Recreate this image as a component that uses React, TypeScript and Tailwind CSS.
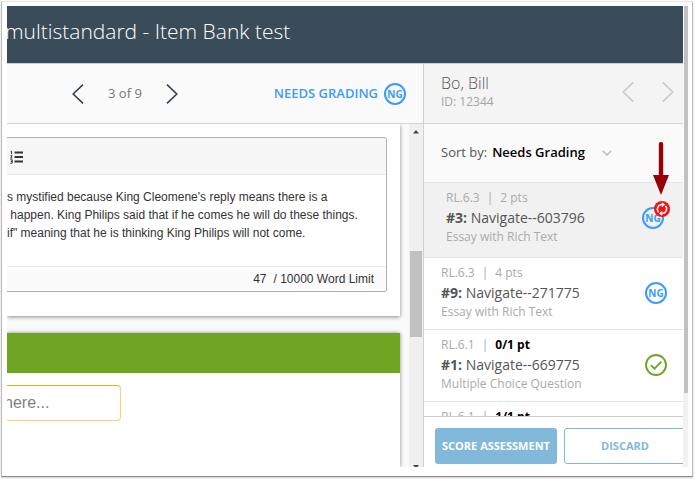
import { useState } from 'react';
import clsx from 'clsx';

const ITEMS = [
  { id: 3, std: 'RL.6.3', score: '2 pts', name: 'Navigate--603796', kind: 'Essay with Rich Text', status: 'rescore' },
  { id: 9, std: 'RL.6.3', score: '4 pts', name: 'Navigate--271775', kind: 'Essay with Rich Text', status: 'ng' },
  { id: 1, std: 'RL.6.1', score: '0/1 pt', name: 'Navigate--669775', kind: 'Multiple Choice Question', status: 'done' },
  { id: 2, std: 'RL.6.1', score: '1/1 pt', name: '', kind: '', status: 'none' },
];

const ANSWER = [
  "s mystified because King Cleomene's reply means there is a",
  ' happen. King Philips said that if he comes he will do these things.',
  'if" meaning that he is thinking King Philips will not come.',
];

function Chevron({ dir }: { dir: 'left' | 'right' }) {
  return (
    <svg width="12" height="20" viewBox="0 0 12 20" fill="none" stroke="currentColor" strokeWidth="1.6">
      <path d={dir === 'left' ? 'M11 .6 1.2 10 11 19.4' : 'M1 .6 10.8 10 1 19.4'} />
    </svg>
  );
}

function NgBadge() {
  return (
    <span className="flex size-[22px] items-center justify-center rounded-full border-2 border-[#3c9bfb] text-[10px] leading-none font-bold text-[#3c9bfb]">
      NG
    </span>
  );
}

function RescoreIcon() {
  return (
    <svg className="absolute -top-[7px] left-[11px]" width="18" height="18" viewBox="0 0 18 18">
      <circle cx="9" cy="9" r="8" fill="#fb0d0d" />
      <g fill="none" stroke="#fff" strokeWidth="1.5">
        <path d="M5.6 12.2A4.6 4.6 0 0 1 9 4.5" />
        <path d="M12.4 5.8A4.6 4.6 0 0 1 9 13.5" />
      </g>
      <path d="M8.8 2.2 12.2 4.6 8.8 7.2zM9.2 15.8 5.8 13.4 9.2 10.8z" fill="#fff" />
    </svg>
  );
}

function Pointer() {
  return (
    <svg className="pointer-events-none absolute top-[18px] right-[13px]" width="18" height="54" viewBox="0 0 18 54" fill="#970006">
      <rect x="6.8" y="0" width="4.4" height="36" rx="2" />
      <path d="M1 33h16L9 53z" />
    </svg>
  );
}

function Status({ status }: { status: string }) {
  if (status === 'done') {
    return (
      <svg width="22" height="22" viewBox="0 0 22 22" fill="none" stroke="#6ea522">
        <circle cx="11" cy="11" r="10" strokeWidth="1.9" />
        <path d="m6 11.2 3.6 3.5 6.6-7" strokeWidth="1.8" />
      </svg>
    );
  }
  if (status === 'ng') return <NgBadge />;
  if (status === 'rescore') {
    return (
      <span className="relative">
        <NgBadge />
        <RescoreIcon />
      </span>
    );
  }
  return null;
}

function ResponsePane() {
  return (
    <div className="flex min-h-0 flex-1 bg-[#fafafa]">
      <div className="flex min-w-0 flex-1 flex-col gap-[17px] overflow-hidden pr-[9px]">
        <section className="bg-white pt-[13px] pr-[13px] pb-6 shadow-[0_1px_4px_rgba(0,0,0,0.45)]">
          <div className="overflow-hidden rounded-r-[3px] border border-l-0 border-[#b0b0b0] bg-white">
            <div className="flex h-[37px] items-center border-b border-[#e8e8e8] bg-[#f7f7f7] pt-px pl-[3px]">
              <button aria-label="Numbered list">
                <svg width="14" height="14" viewBox="0 0 14 14" fill="none" stroke="#333">
                  <path d="M4.5 2.5H13M4.5 7H13M4.5 11.5H13" strokeWidth="1.8" />
                  <path d="M.6 1.2h1v3M.5 5.7h1.6L.7 8.2h1.6M.4 9.8h1.8v3.4H.4M.9 11.5h1.2" />
                </svg>
              </button>
            </div>
            <div className="h-[92px] border-b border-[#ececec] pt-[13px] font-['Liberation_Sans',sans-serif] text-[12px] leading-[18px] whitespace-pre text-[#333]">
              {ANSWER.map(line => (
                <p key={line}>{line}</p>
              ))}
            </div>
            <div className="flex h-6 items-center justify-end gap-[7px] bg-[#fbfbfb] pr-3 font-['Liberation_Sans',sans-serif] text-[12px] text-[#333]">
              <span>47</span>
              <span>/ 10000 Word Limit</span>
            </div>
          </div>
        </section>
        <section className="flex-1 bg-white shadow-[0_0_4px_rgba(0,0,0,0.45)]">
          <div className="h-10 bg-[#6ea522]" />
          <input
            type="text"
            aria-label="here..."
            placeholder="here..."
            className="mt-3 -ml-3 h-9 w-[126px] rounded-[4px] border border-[#fccf78] border-t-[#f2a816] px-2 font-['Liberation_Sans',sans-serif] text-[16px] text-[#444] placeholder:text-[#7f7f7f]"
          />
        </section>
      </div>
      <div className="flex w-[14px] flex-col items-center overflow-hidden bg-[#f0f0f0] pt-[6px]">
        <svg width="6" height="4" viewBox="0 0 6 4" fill="#444">
          <path d="M3 0 6 3.5H0z" />
        </svg>
        <div className="mt-[117px] h-[86px] w-3 bg-[#c1c1c1]" />
        <svg className="mt-auto" width="6" height="2" viewBox="0 0 6 2" fill="#444">
          <path d="M0 0h6L4.3 2H1.7z" />
        </svg>
      </div>
    </div>
  );
}

export default function App() {
  const [active, setActive] = useState(3);

  return (
    <div className="h-screen bg-white pt-px pr-[2px] pb-[2px] pl-px font-['Open_Sans',sans-serif]">
      <div className="flex h-full border border-t-[#e4e4e4] border-r-[#bbb] border-b-[#8a8a8a] border-l-[#bbb] pt-1 pr-1 pb-[9px] pl-[5px] shadow-[0_1px_2px_rgba(0,0,0,0.2)]">
        <div className="flex min-w-0 flex-1 flex-col overflow-hidden">
          <header className="h-[58px] shrink-0 border-b border-[#c8d0d4] bg-[#3a4b59]">
            <h1 className="-ml-[2px] pt-[10px] text-[21px] leading-[30px] font-light whitespace-nowrap text-white">
              multistandard - Item Bank test
            </h1>
          </header>
          <div className="flex min-h-0 flex-1">
            <main className="flex min-w-0 flex-1 flex-col">
              <div className="flex h-[60px] shrink-0 items-center justify-between border-b border-[#d4d4d4] bg-[#fafafa] pr-[17px] pl-[65px]">
                <div className="flex items-center gap-6 text-[13px] text-[#777]">
                  <button aria-label="Previous item" className="text-[#33424e]"><Chevron dir="left" /></button>
                  <span>3 of 9</span>
                  <button aria-label="Next item" className="text-[#33424e]"><Chevron dir="right" /></button>
                </div>
                <div className="flex items-center gap-[6px] text-[13px] font-semibold text-[#3c9bfb]">
                  NEEDS GRADING <NgBadge />
                </div>
              </div>
              <ResponsePane />
            </main>

            <aside className="flex w-[260px] shrink-0 flex-col border-l border-[#d0d0d0] bg-white">
              <div className="flex h-[60px] shrink-0 items-center justify-between border-b border-[#d8d8d8] bg-[#f4f4f4] pr-[9px] pb-[3px] pl-[17px]">
                <div>
                  <div className="text-[16px] leading-[20px] font-light text-[#555]">Bo, Bill</div>
                  <div className="text-[12px] leading-[18px] text-[#a5a5a5]">ID: 12344</div>
                </div>
                <div className="flex gap-7 text-[#c8c8c8]">
                  <button aria-label="Previous student"><Chevron dir="left" /></button>
                  <button aria-label="Next student"><Chevron dir="right" /></button>
                </div>
              </div>
              <div className="relative flex min-h-0 flex-1 flex-col">
                <div className="flex h-[58px] shrink-0 items-center bg-[#fafafa] pl-[17px] text-[13px]">
                  <label htmlFor="sort" className="text-[#555]">Sort by:</label>
                  <select id="sort" className="ml-[5px] w-[110px] appearance-none font-semibold text-black">
                    <option>Needs Grading</option>
                  </select>
                  <svg width="10" height="6" viewBox="0 0 10 6" fill="none" stroke="#bbb" strokeWidth="1.4">
                    <path d="m.7.7 4.3 4.2L9.3.7" />
                  </svg>
                </div>
                <ul className="min-h-0 flex-1 overflow-hidden">
                  {ITEMS.map(item => (
                    <li key={item.id} className="border-t border-[#e4e4e4]">
                      <button
                        onClick={() => setActive(item.id)}
                        className={clsx(
                          'flex w-full items-center justify-between text-left',
                          active === item.id ? 'h-[74px] bg-[#f1f1f1] pr-[19px] pb-1 pl-[22px]' : 'h-[71px] pr-4 pb-[2px] pl-[17px]',
                        )}
                      >
                        <span className="flex flex-col pb-[2px]">
                          <span className="flex h-5 items-center gap-[7px] text-[12px] text-[#aaa]">
                            {item.std} <span>|</span>
                            <span className={clsx(item.score.includes('/') && 'font-bold text-black')}>{item.score}</span>
                          </span>
                          <span className="h-5 text-[14px] leading-5 text-[#555]">
                            {item.name && <><b>#{item.id}:</b> {item.name}</>}
                          </span>
                          <span className="h-[18px] text-[12px] leading-[18px] text-[#aaa]">{item.kind}</span>
                        </span>
                        <Status status={item.status} />
                      </button>
                    </li>
                  ))}
                </ul>
                <Pointer />
              </div>
              <div className="flex h-[51px] shrink-0 gap-[7px] overflow-hidden border-t border-[#ccc] pt-[11px] pl-[11px] text-[11px] font-bold">
                <button className="h-9 w-[122px] shrink-0 rounded-[3px] bg-[#82b9db] text-white">SCORE ASSESSMENT</button>
                <button className="h-9 w-[122px] shrink-0 rounded-[3px] border border-[#82b9db] text-[#82b9db]">DISCARD</button>
              </div>
            </aside>
          </div>
        </div>
        <div className="w-[5px] shrink-0 bg-[#f1f1f1]">
          <div className="h-[84%] border-l border-white bg-[#c1c1c1]" />
        </div>
      </div>
    </div>
  );
}
